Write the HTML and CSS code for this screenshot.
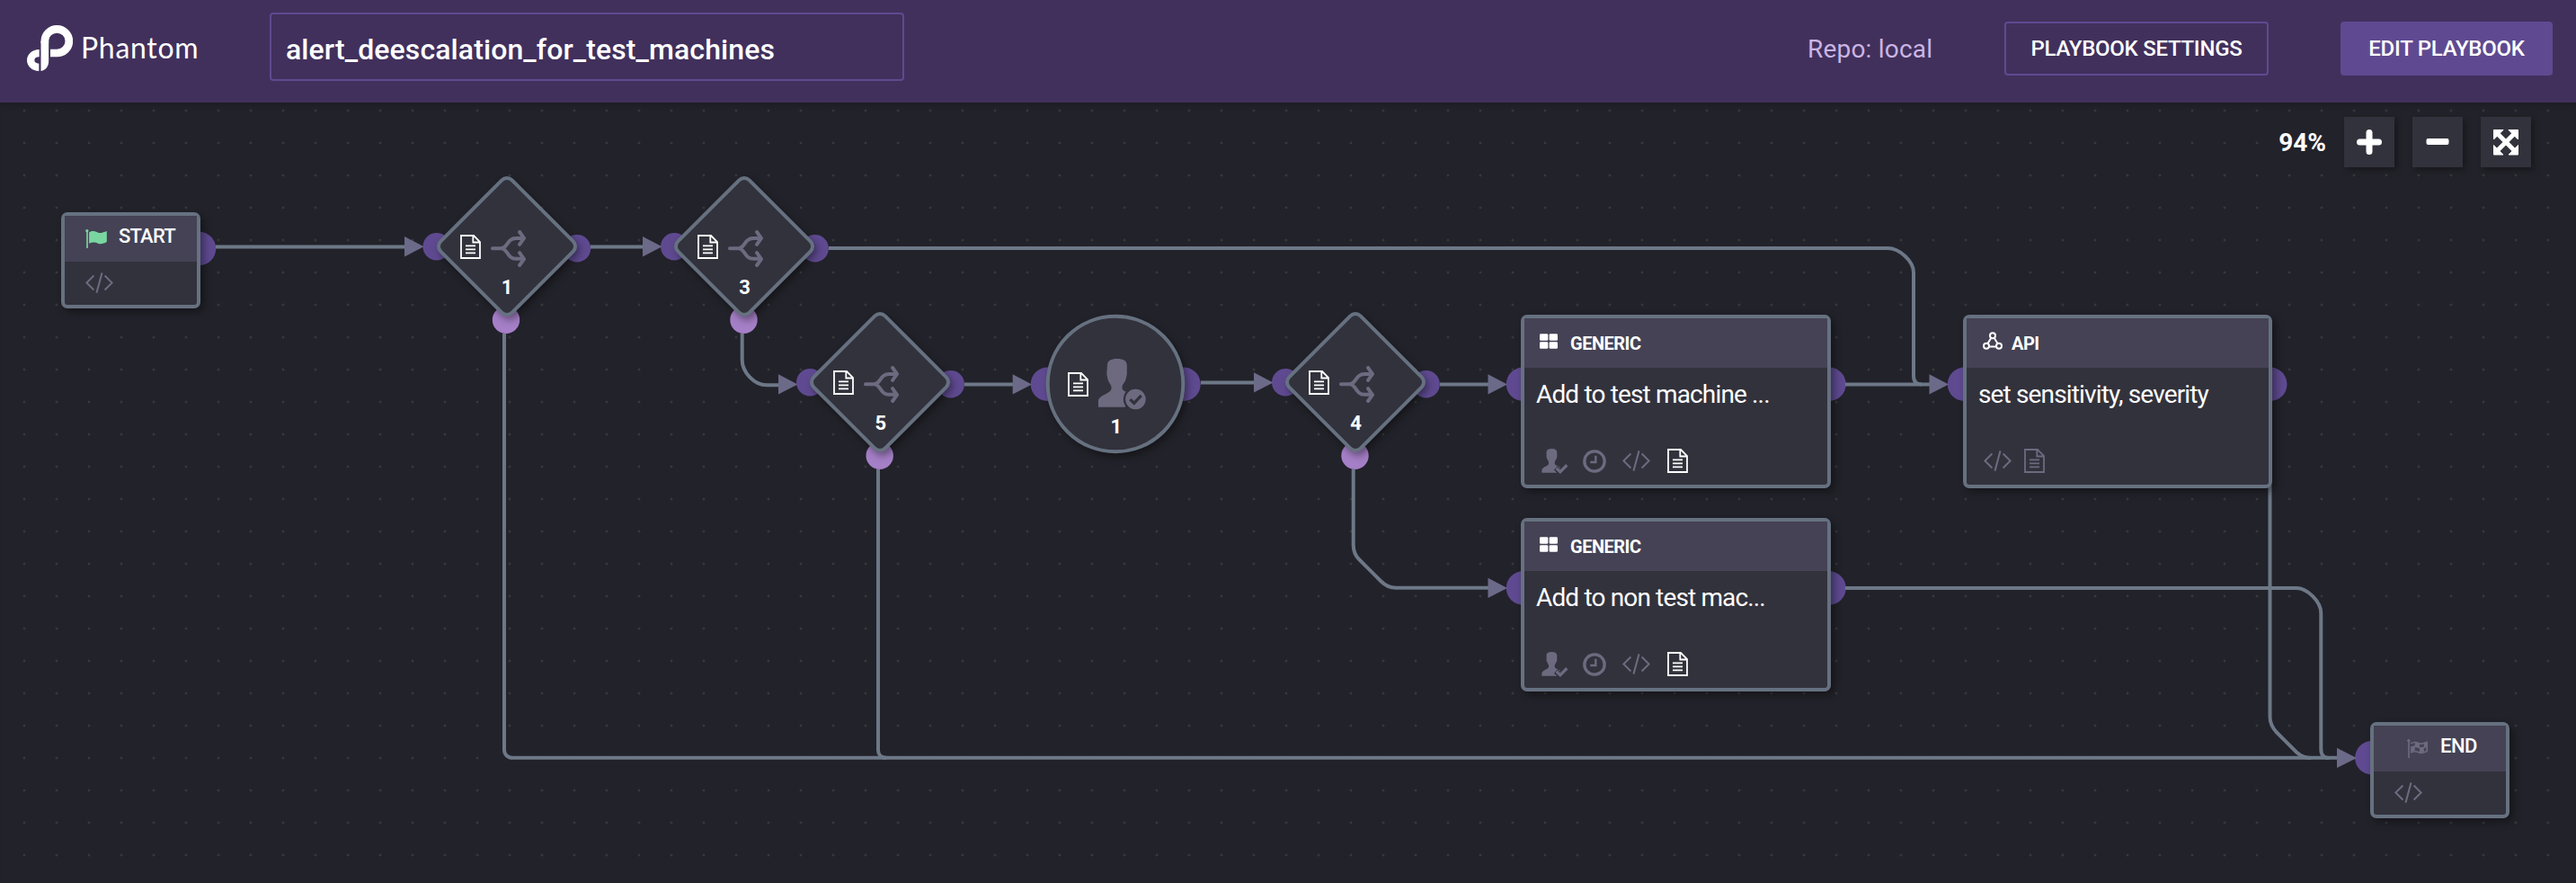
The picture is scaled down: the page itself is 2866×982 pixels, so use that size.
FILE: index.html
```html
<!DOCTYPE html>
<html lang="en">
<head>
<meta charset="utf-8">
<title>Phantom Playbook</title>
<link rel="stylesheet" href="styles.css">
</head>
<body>
<svg class="defs" width="0" height="0">
  <symbol id="doc" viewBox="0 0 23 27"><path d="M1 1H15L22 8V26H1ZM14.3 1V8.5H22M6 12.3H17M6 16.3H17M6 20.3H17" fill="none" stroke="currentColor" stroke-width="1.8"/></symbol>
  <symbol id="code" viewBox="0 0 92 68"><path d="M28 10L4 34L28 58M64 10L88 34L64 58M55 1L37 67" fill="none" stroke="currentColor" stroke-width="6"/></symbol>
  <symbol id="split" viewBox="0 0 118 124"><path d="M6 61H35C58 61 54 27 85 27H110M35 61C58 61 54 96 85 96H110M97 6L112 27L97 48M97 76L112 97L97 118" fill="none" stroke="currentColor" stroke-width="12" stroke-linecap="round" stroke-linejoin="round"/></symbol>
  <symbol id="person" viewBox="0 0 160 172">
    <path d="M30 22C30 6 42 0 63 0S96 6 96 22V52L92 70C88 82 80 84 80 98C80 110 100 112 112 118L90 162H0V140C4 120 44 118 44 98C44 86 36 82 32 70L28 52Z" fill="currentColor"/>
    <circle cx="125" cy="136" r="41" fill="#32323c"/><circle cx="125" cy="136" r="34" fill="currentColor"/>
    <path d="M107 136L120 149L144 123" fill="none" stroke="#32323c" stroke-width="10"/>
  </symbol>
  <symbol id="approve" viewBox="0 0 90 86">
    <path d="M16 12C16 4 22 0 34 0S52 4 52 12V26C52 36 44 40 44 49C44 57 54 58 62 63L66 82H0V74C2 60 24 60 24 49C24 40 16 36 16 26Z" fill="currentColor"/>
    <path d="M48 66L63 80L87 55" fill="none" stroke="#32323c" stroke-width="18"/>
    <path d="M50 67L63 79L86 56" fill="none" stroke="currentColor" stroke-width="10"/>
  </symbol>
  <symbol id="clock" viewBox="0 0 78 78"><circle cx="39" cy="39" r="33.500" fill="none" stroke="currentColor" stroke-width="10"/><path d="M43 20V42H25" fill="none" stroke="currentColor" stroke-width="7"/></symbol>
  <symbol id="grid" viewBox="0 0 60 50"><g fill="currentColor"><rect width="28" height="23" rx="4"/><rect x="32" width="28" height="23" rx="4"/><rect y="27" width="28" height="23" rx="4"/><rect x="32" y="27" width="28" height="23" rx="4"/></g></symbol>
  <symbol id="api" viewBox="0 0 66 62"><g fill="none" stroke="currentColor" stroke-width="6"><circle cx="33" cy="12" r="9"/><circle cx="12" cy="47" r="9"/><circle cx="54" cy="47" r="9"/><path d="M28 20L16 39M38 20L50 39M22 49H44"/></g></symbol>
  <symbol id="flag" viewBox="0 0 72 64"><g fill="currentColor"><circle cx="5" cy="5" r="5"/><rect x="3" y="4" width="5" height="60"/><path d="M12 11C26 2 36 8 44 12C54 14 62 9 72 6V43C62 49 52 52 42 48C32 42 22 44 12 48Z"/></g></symbol>
  <symbol id="checkered" viewBox="0 0 72 64"><g fill="currentColor"><circle cx="5" cy="5" r="5"/><rect x="3" y="4" width="5" height="60"/></g><path d="M12 15C26 6 34 12 42 15C54 18 60 12 68 10M12 29C26 20 34 26 42 29C54 32 60 26 68 24M12 46C26 37 34 43 42 46C54 49 60 43 68 41M67 8V43" fill="none" stroke="currentColor" stroke-width="5"/><path d="M26 10L42 15V30L26 25ZM12 29L26 25V39L12 44ZM42 29L57 29V46L42 45ZM57 14L69 10V26L57 29Z" fill="currentColor"/></symbol>
</svg>

<header class="topbar">
  <div class="brand">
    <svg class="brand-mark" viewBox="30 40 153 153"><g fill="#fff"><path d="M89.500 100V93A40.500 40 0 1 1 130 133H108" fill="none" stroke="#fff" stroke-width="26"/><path d="M76.500 93V193C92 190 102.500 178 102.500 160V93Z"/><path d="M71 121C48 121 30 137 30 157S48 193 70 193V168C60 168 55 163 55 157S60 146 71 146Z"/></g></svg>
    <span class="brand-name">Phantom</span>
  </div>
  <div class="name-field">alert_deescalation_for_test_machines</div>
  <div class="repo">Repo: local</div>
  <button class="btn btn-settings">PLAYBOOK SETTINGS</button>
  <button class="btn btn-edit">EDIT PLAYBOOK</button>
</header>

<main class="canvas">
  <svg class="edges" viewBox="0 114 2866 868">
    <g class="ports">
      <circle cx="221.500" cy="276.500" r="18.700"/>
      <circle cx="485.700" cy="274.200" r="15.200"/><circle cx="642" cy="276.200" r="15.200"/>
      <circle cx="750.200" cy="274.200" r="15.200"/><circle cx="906.700" cy="276.200" r="15.200"/>
      <circle cx="901.200" cy="425.300" r="15.200"/><circle cx="1057.800" cy="427.300" r="15.200"/>
      <circle cx="1165.400" cy="427.300" r="18.700"/><circle cx="1317" cy="427.300" r="18.700"/>
      <circle cx="1430.200" cy="425.300" r="15.200"/><circle cx="1586.700" cy="427.300" r="15.200"/>
      <circle cx="1694.500" cy="427.300" r="18.700"/><circle cx="2035" cy="427.300" r="18.700"/>
      <circle cx="1694.500" cy="654" r="18.700"/><circle cx="2035" cy="654" r="18.700"/>
      <circle cx="2185.500" cy="427.300" r="18.700"/><circle cx="2525.800" cy="427.300" r="18.700"/>
      <circle cx="2638.800" cy="842.800" r="18.700"/>
    </g>
    <g class="ports-alt">
      <circle cx="563" cy="355.700" r="15.200"/><circle cx="827.500" cy="355.700" r="15.200"/>
      <circle cx="978.700" cy="506.700" r="15.200"/><circle cx="1507.500" cy="506.700" r="15.200"/>
    </g>
    <g class="lines">
      <path d="M240 274.500H452"/>
      <path d="M657 274.500H717"/>
      <path d="M922 276H2100C2114 276 2129 291 2129 303V418C2129 424 2132 427.500 2138 427.500"/>
      <path d="M825.700 371V400C825.700 414 839 428.300 853 428.300H868"/>
      <path d="M1073 427.500H1129"/>
      <path d="M1336 425.500H1397"/>
      <path d="M1602 427.500H1657"/>
      <path d="M2053 427.500H2148"/>
      <path d="M1505.700 522V606C1505.700 612 1508 618 1512 622L1536 646C1541 651 1546 653.800 1553 653.800H1657"/>
      <path d="M2053 654H2555C2567 654 2582.300 669 2582.300 682V833C2582.300 839 2585 843 2591 843"/>
      <path d="M2525.500 540V797C2525.500 802 2528 809 2532.500 814L2555 836.500C2560 841 2564 843 2571 843"/>
      <path d="M561 371V834C561 839 565 842.800 570 842.800H2602"/>
      <path d="M977 522V834C977 839 980 842.800 986 842.800"/>
    </g>
    <g class="arrows">
      <path d="M450 263V285.500L471.500 274.300Z"/>
      <path d="M715 263V285.500L736.500 274.300Z"/>
      <path d="M866 416.300V438.500L887.500 427.400Z"/>
      <path d="M1126.700 416.300V438.500L1148 427.400Z"/>
      <path d="M1395 414.300V436.500L1416.500 425.400Z"/>
      <path d="M1655.500 416.300V438.500L1677 427.400Z"/>
      <path d="M1655.500 642.800V665L1677 654Z"/>
      <path d="M2146.500 416.300V438.500L2168 427.400Z"/>
      <path d="M2600 831.800V854L2622 842.900Z"/>
    </g>
  </svg>

  <section class="card card-small at-start">
    <div class="card-head"><svg class="i-flag green"><use href="#flag"/></svg><span>START</span></div>
    <div class="card-foot"><svg class="i-code"><use href="#code"/></svg></div>
  </section>

  <section class="gate at-d1"><svg class="shape" viewBox="-80 -80 160 160"><rect x="-56.100" y="-56.100" width="112.200" height="112.200" rx="8" transform="rotate(45)"/></svg><div class="gate-icons"><svg class="i-doc on"><use href="#doc"/></svg><svg class="i-split"><use href="#split"/></svg></div><b>1</b></section>
  <section class="gate at-d3"><svg class="shape" viewBox="-80 -80 160 160"><rect x="-56.100" y="-56.100" width="112.200" height="112.200" rx="8" transform="rotate(45)"/></svg><div class="gate-icons"><svg class="i-doc on"><use href="#doc"/></svg><svg class="i-split"><use href="#split"/></svg></div><b>3</b></section>
  <section class="gate at-d5"><svg class="shape" viewBox="-80 -80 160 160"><rect x="-56.100" y="-56.100" width="112.200" height="112.200" rx="8" transform="rotate(45)"/></svg><div class="gate-icons"><svg class="i-doc on"><use href="#doc"/></svg><svg class="i-split"><use href="#split"/></svg></div><b>5</b></section>
  <section class="gate gate-round at-p1"><svg class="shape" viewBox="-80 -80 160 160"><circle r="75.300"/></svg><div class="gate-icons"><svg class="i-doc on"><use href="#doc"/></svg><svg class="i-person"><use href="#person"/></svg></div><b>1</b></section>
  <section class="gate at-d4"><svg class="shape" viewBox="-80 -80 160 160"><rect x="-56.100" y="-56.100" width="112.200" height="112.200" rx="8" transform="rotate(45)"/></svg><div class="gate-icons"><svg class="i-doc on"><use href="#doc"/></svg><svg class="i-split"><use href="#split"/></svg></div><b>4</b></section>

  <section class="card at-g1">
    <div class="card-head"><svg class="i-grid"><use href="#grid"/></svg><span>GENERIC</span></div>
    <div class="card-title">Add to test machine ...</div>
    <div class="card-foot"><svg class="i-approve"><use href="#approve"/></svg><svg class="i-clock"><use href="#clock"/></svg><svg class="i-code"><use href="#code"/></svg><svg class="i-doc on"><use href="#doc"/></svg></div>
  </section>
  <section class="card at-g2">
    <div class="card-head"><svg class="i-grid"><use href="#grid"/></svg><span>GENERIC</span></div>
    <div class="card-title">Add to non test mac...</div>
    <div class="card-foot"><svg class="i-approve"><use href="#approve"/></svg><svg class="i-clock"><use href="#clock"/></svg><svg class="i-code"><use href="#code"/></svg><svg class="i-doc on"><use href="#doc"/></svg></div>
  </section>
  <section class="card card-api at-api">
    <div class="card-head"><svg class="i-api"><use href="#api"/></svg><span>API</span></div>
    <div class="card-title">set sensitivity, severity</div>
    <div class="card-foot"><svg class="i-code"><use href="#code"/></svg><svg class="i-doc"><use href="#doc"/></svg></div>
  </section>
  <section class="card card-small card-end at-end">
    <div class="card-head"><svg class="i-flag grey"><use href="#checkered"/></svg><span>END</span></div>
    <div class="card-foot"><svg class="i-code"><use href="#code"/></svg></div>
  </section>

  <div class="zoom">
    <span class="zoom-level">94%</span>
    <button class="zoom-btn"><svg viewBox="0 0 56 56"><path d="M28 17.500V38.500M17.500 28H38.500" stroke="#fff" stroke-width="7" stroke-linecap="round"/></svg></button>
    <button class="zoom-btn"><svg viewBox="0 0 56 56"><rect x="15.500" y="24" width="25" height="7" rx="2" fill="#fff"/></svg></button>
    <button class="zoom-btn"><svg viewBox="0 0 56 56"><path d="M18 18L38 38M38 18L18 38" stroke="#fff" stroke-width="5"/><path d="M14.500 14.500H25L14.500 25ZM41.500 14.500V25L31 14.500ZM14.500 42V31.500L25 42ZM41.500 42H31L41.500 31.500Z" fill="#fff" stroke="#fff" stroke-linejoin="round"/></svg></button>
  </div>
</main>
</body>
</html>
```
FILE: styles.css
```css
* { box-sizing: border-box; }
body { margin: 0; width: 2866px; height: 982px; overflow: hidden; background: #22222a; color: #fff; font-family: Roboto, sans-serif; }
svg { display: block; flex: none; }
button { font: inherit; color: inherit; padding: 0; border: 0; }
.defs { position: absolute; }

.topbar { display: flex; align-items: flex-start; height: 114px; background: #41305c; white-space: nowrap; }
.brand { display: flex; width: 300px; padding: 28px 0 0 30px; }
.brand-mark { width: 51px; height: 51px; }
.brand-name { margin: 5px 0 0 9px; font: 400 32px/40px Lato, sans-serif; letter-spacing: .7px; }
.name-field { width: 706px; height: 76px; margin-top: 14px; padding-left: 16px; border: 2px solid #5f4a91; border-radius: 4px; font-size: 32px; font-weight: 500; line-height: 78px; letter-spacing: .1px; }
.repo { width: 218px; margin: 24px 0 0 1005px; color: #cbb5e3; font-size: 28px; line-height: 61px; letter-spacing: .2px; margin-right: 1px; }
.btn { height: 60px; margin-top: 24px; border-radius: 4px; font-size: 24px; font-weight: 500; line-height: 60px; letter-spacing: -.27px; text-align: center; }
.btn-settings { width: 294px; border: 2px solid #5f4a91; background: transparent; line-height: 56px; }
.btn-edit { width: 236px; margin-left: 80px; background: #5f4a91; }

.canvas { position: relative; height: 868px; background: radial-gradient(circle, #37383b 0 1px, transparent 1.800px) 9px -9px / 36px 36px, #22222a; box-shadow: inset 0 8px 8px -6px rgba(0,0,0,.2); }
.edges { position: absolute; left: 0; top: 0; width: 2866px; height: 868px; }
.ports { fill: #5f4a91; }
.ports-alt { fill: #a57fc7; }
.lines { fill: none; stroke: #6d7887; stroke-width: 4; }
.arrows { fill: #6b6a88; }

.card { position: absolute; display: flex; flex-direction: column; width: 345px; height: 193px; border: 4px solid #667180; border-radius: 7px; background: #32323c; box-shadow: 4px 4px 10px rgba(0,0,0,.4); white-space: nowrap; }
.card-head { display: flex; align-items: center; height: 55px; flex: none; padding-left: 17px; gap: 14px; background: #444254; font-size: 20px; font-weight: 700; letter-spacing: -.5px; }
.card-title { padding: 13px 0 0 13px; font-size: 28px; line-height: 34px; letter-spacing: -.85px; }
.card-foot { display: flex; align-items: center; margin-top: auto; height: 52px; padding: 0 0 1px 19px; gap: 16px; color: #6d6a80; }
.i-clock + .i-code { margin-left: 2px; }
.i-code + .i-doc.on { margin-left: 3px; }
.card-api { width: 344px; }
.card-api .card-head { padding-left: 18px; gap: 10px; }
.card-api .card-foot { gap: 14px; }
.card-small { width: 155px; height: 107px; }
.card-small .card-head { height: 51px; padding: 0 0 7px 23px; gap: 13px; font-size: 22px; font-weight: 500; letter-spacing: -.8px; }
.card-small .card-foot { height: 48px; padding: 0 0 1px 23px; }
.card-end .card-head { padding-left: 37px; letter-spacing: -.5px; }
.at-start { left: 68px; top: 122px; }
.at-g1 { left: 1692px; top: 236px; }
.at-g2 { left: 1692px; top: 462px; }
.at-api { left: 2184px; top: 236px; }
.at-end { left: 2637px; top: 689px; }

.gate { position: absolute; width: 160px; height: 160px; }
.shape { position: absolute; inset: 0; width: 160px; height: 160px; overflow: visible; fill: #32323c; stroke: #667180; stroke-width: 4; filter: drop-shadow(3px 4px 4px rgba(0,0,0,.4)); }
.gate-icons { position: relative; display: flex; align-items: flex-start; gap: 11px; padding: 62px 0 0 28px; height: 113px; }
.gate-icons .i-doc { margin-top: 5px; }
.gate b { position: relative; display: block; text-align: center; font-size: 22px; line-height: 26px; padding-left: 1px; }
.gate-round .gate-icons { padding: 52px 0 0 27px; height: 115px; }
.gate-round .gate-icons .i-doc { margin-top: 15px; }
.at-d1 { left: 483.500px; top: 80px; }
.at-d3 { left: 748px; top: 80px; }
.at-d5 { left: 899.300px; top: 231.300px; }
.at-p1 { left: 1161.300px; top: 233.300px; }
.at-d4 { left: 1428px; top: 231.300px; }

.i-doc { width: 23px; height: 27px; color: #6d6a80; }
.i-doc.on { color: #fff; }
.i-code { width: 31px; height: 23px; }
.i-split { width: 39px; height: 41px; color: #6d6a80; }
.i-person { width: 53px; height: 57px; color: #6d6a80; }
.i-approve { width: 30px; height: 28px; }
.i-clock { width: 26px; height: 26px; }
.i-grid { width: 20px; height: 17px; margin-bottom: 4px; }
.i-api { width: 22px; height: 21px; margin-bottom: 4px; }
.i-flag { width: 24px; height: 21px; margin-top: 6px; }
.green { color: #7ad6a1; }
.grey { color: #6d6a80; }

.zoom { position: absolute; right: 50px; top: 16px; display: flex; align-items: center; gap: 20px; }
.zoom-level { font-size: 28px; font-weight: 700; }
.zoom-btn { width: 56px; height: 56px; background: #32323c; box-shadow: 3px 3px 7px rgba(0,0,0,.35); }
```
